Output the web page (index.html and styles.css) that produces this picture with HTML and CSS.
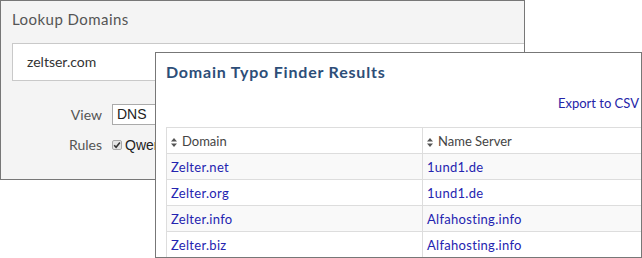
FILE: index.html
```html
<!DOCTYPE html>
<html lang="en">
<head>
  <meta charset="UTF-8">
  <title>Domain Typo Finder</title>
  <link rel="stylesheet" href="styles.css">
</head>
<body>

<div class="stage">
  <div class="lookup">
    <h3 class="lookup-title">Lookup Domains</h3>
    <div class="lookup-input">zeltser.com</div>
    <div class="field">
      <span class="field-label">View</span>
      <span class="select">DNS</span>
    </div>
    <div class="field">
      <span class="field-label">Rules</span>
      <span class="check">
        <svg width="10" height="10" viewBox="0 0 10 10"><rect x="0.5" y="0.5" width="9" height="9" rx="1.5" fill="#e4e4e4" stroke="#a8a8a8"/><path d="M2.2 5.2 L4.1 7.2 L7.9 2.6" fill="none" stroke="#333" stroke-width="1.6"/></svg>
      </span>
      <span class="check-text">Qwerty</span>
    </div>
  </div>

  <!-- results panel sits on top of the lookup form -->
  <div class="results">
    <h3 class="results-title">Domain Typo Finder Results</h3>
    <div class="export"><a href="#">Export to CSV</a></div>
    <table class="grid">
      <tr>
        <th class="col-domain"><svg class="sort" width="6" height="9" viewBox="0 0 6 9"><path d="M3 0 L6 3.6 L0 3.6 Z M0 5.4 L6 5.4 L3 9 Z" fill="#555"/></svg>Domain</th>
        <th><svg class="sort" width="6" height="9" viewBox="0 0 6 9"><path d="M3 0 L6 3.6 L0 3.6 Z M0 5.4 L6 5.4 L3 9 Z" fill="#555"/></svg>Name Server</th>
      </tr>
      <tr class="odd"><td><a href="#">Zelter.net</a></td><td><a href="#">1und1.de</a></td></tr>
      <tr><td><a href="#">Zelter.org</a></td><td><a href="#">1und1.de</a></td></tr>
      <tr class="odd"><td><a href="#">Zelter.info</a></td><td><a href="#">Alfahosting.info</a></td></tr>
      <tr><td><a href="#">Zelter.biz</a></td><td><a href="#">Alfahosting.info</a></td></tr>
    </table>
  </div>
</div>

</body>
</html>
```

FILE: styles.css
```css
body {
  margin: 0;
  background: #fff;
  font-family: "Lato", "Open Sans", sans-serif;
  color: #333;
}
.stage {
  position: relative;
  width: 642px;
  height: 258px;
  overflow: hidden;
}
.lookup {
  width: 512px;
  height: 178px;
  border: 1px solid #777;
  background: #f4f4f4;
  overflow: hidden;
  padding: 0 0 0 11px;
}
.lookup-title {
  margin: 0;
  height: 42px;
  line-height: 36px;
  font-size: 15px;
  font-weight: normal;
  color: #555;
  letter-spacing: 0.45px;
}
.lookup-input {
  width: 540px;
  height: 36px;
  border: 1px solid #c9c9c9;
  background: #fff;
  padding-left: 14px;
  line-height: 36px;
  font-size: 14px;
  color: #333;
  margin-bottom: 23px;
}
.field {
  display: flex;
  align-items: center;
  height: 21px;
  margin-bottom: 9px;
}
.field-label {
  width: 90px;
  text-align: right;
  font-size: 14px;
  color: #555;
  margin-right: 10px;
}
.select {
  width: 150px;
  height: 19px;
  border: 1px solid #aaa;
  background: #fff;
  padding-left: 4px;
  font-family: "Liberation Sans", Arial, sans-serif;
  font-size: 14px;
  line-height: 19px;
  color: #222;
}
.check {
  display: flex;
  width: 10px;
  height: 10px;
  margin-right: 3px;
}
.check-text {
  font-family: "Liberation Sans", Arial, sans-serif;
  font-size: 14px;
  color: #222;
}
.results {
  position: absolute;
  left: 155px;
  top: 52px;
  width: 475px;
  height: 204px;
  border: 1px solid #777;
  background: #fff;
  overflow: hidden;
  padding-left: 10px;
}
.results-title {
  margin: 0;
  height: 38px;
  line-height: 38px;
  font-size: 16px;
  font-weight: bold;
  color: #2d4e78;
  letter-spacing: 0.8px;
}
.export {
  text-align: right;
  padding-right: 2px;
  font-size: 13px;
  height: 36px;
  line-height: 25px;
}
.export a {
  color: #2424a8;
  text-decoration: none;
}
.grid {
  border-collapse: collapse;
  width: 520px;
  font-size: 13px;
}
.grid th,
.grid td {
  border: 1px solid #ddd;
  height: 26px;
  padding: 0 4px;
  text-align: left;
  box-sizing: border-box;
}
.grid th {
  font-weight: normal;
  color: #444;
}
.col-domain {
  width: 256px;
}
.sort {
  margin-right: 5px;
  vertical-align: -1px;
}
.grid tr.odd td {
  background: #f9f9f9;
}
.grid a {
  color: #2424b0;
  text-decoration: none;
  letter-spacing: 0.3px;
}
```
